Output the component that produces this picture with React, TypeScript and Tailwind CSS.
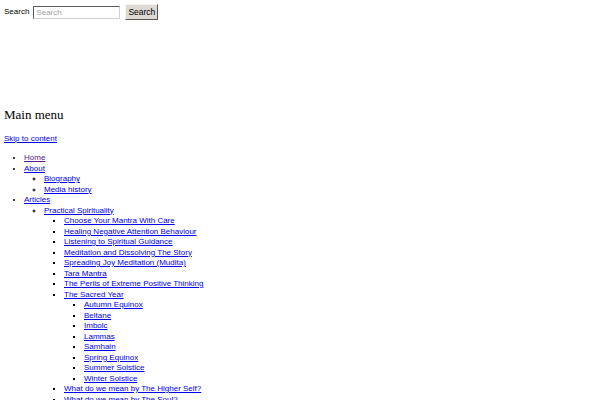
import React from "react";

type Item = { t: string; v?: boolean; c?: Item[] };

const menu: Item[] = [
  { t: "Home", v: true },
  { t: "About", c: [{ t: "Biography" }, { t: "Media history" }] },
  {
    t: "Articles",
    c: [
      {
        t: "Practical Spirituality",
        c: [
          { t: "Choose Your Mantra With Care" },
          { t: "Healing Negative Attention Behaviour" },
          { t: "Listening to Spiritual Guidance" },
          { t: "Meditation and Dissolving The Story" },
          { t: "Spreading Joy Meditation (Mudita)" },
          { t: "Tara Mantra" },
          { t: "The Perils of Extreme Positive Thinking" },
          {
            t: "The Sacred Year",
            c: [
              { t: "Autumn Equinox" },
              { t: "Beltane" },
              { t: "Imbolc" },
              { t: "Lammas" },
              { t: "Samhain" },
              { t: "Spring Equinox" },
              { t: "Summer Solstice" },
              { t: "Winter Solstice" },
            ],
          },
          { t: "What do we mean by The Higher Self?" },
          { t: "What do we mean by The Soul?" },
        ],
      },
    ],
  },
];

function List({ items, level }: { items: Item[]; level: number }) {
  const cls =
    level === 0
      ? "list-disc pl-[20px]"
      : level === 1
      ? "list-[circle] pl-[20px]"
      : "list-[square] pl-[20px]";
  return (
    <ul className={cls}>
      {items.map((it) => (
        <li key={it.t}>
          <a
            href="#"
            className={it.v ? "text-[#551a8b] underline" : "text-[#0000ee] underline"}
          >
            {it.t}
          </a>
          {it.c && <List items={it.c} level={level + 1} />}
        </li>
      ))}
    </ul>
  );
}

export default function App() {
  return (
    <div
      className="bg-white text-black p-[4px] text-[8px] leading-[10.5px] min-h-[400px]"
      style={{ fontFamily: '"Liberation Sans", Arial, sans-serif' }}
    >
      <form className="flex items-center h-[16px]" onSubmit={(e) => e.preventDefault()}>
        <label className="mr-[4px]">Search</label>
        <input
          placeholder="Search"
          className="w-[87px] h-[13px] bg-white border border-t-[#5a5a5a] border-l-[#5a5a5a] border-b-[#d0d0d0] border-r-[#d0d0d0] px-[2px] text-[8px] placeholder:text-[#a0a0a0] outline-none"
          style={{ fontFamily: '"Liberation Sans", Arial, sans-serif' }}
        />
        <button
          type="submit"
          className="ml-[5px] w-[33px] h-[16px] bg-[#dcdad2] border border-t-[#f4f4f0] border-l-[#f4f4f0] border-b-[#555] border-r-[#555] text-[8.5px] leading-none text-black"
          style={{ fontFamily: '"Liberation Sans", Arial, sans-serif' }}
        >
          Search
        </button>
      </form>
      <h2
        className="mt-[87px] text-[13px] leading-[15px] font-normal"
        style={{ fontFamily: '"Liberation Serif", "Times New Roman", serif' }}
      >
        Main menu
      </h2>
      <div className="mt-[12px]">
        <a href="#" className="text-[#0000ee] underline">
          Skip to content
        </a>
      </div>
      <div className="mt-[8.5px]">
        <List items={menu} level={0} />
      </div>
    </div>
  );
}
